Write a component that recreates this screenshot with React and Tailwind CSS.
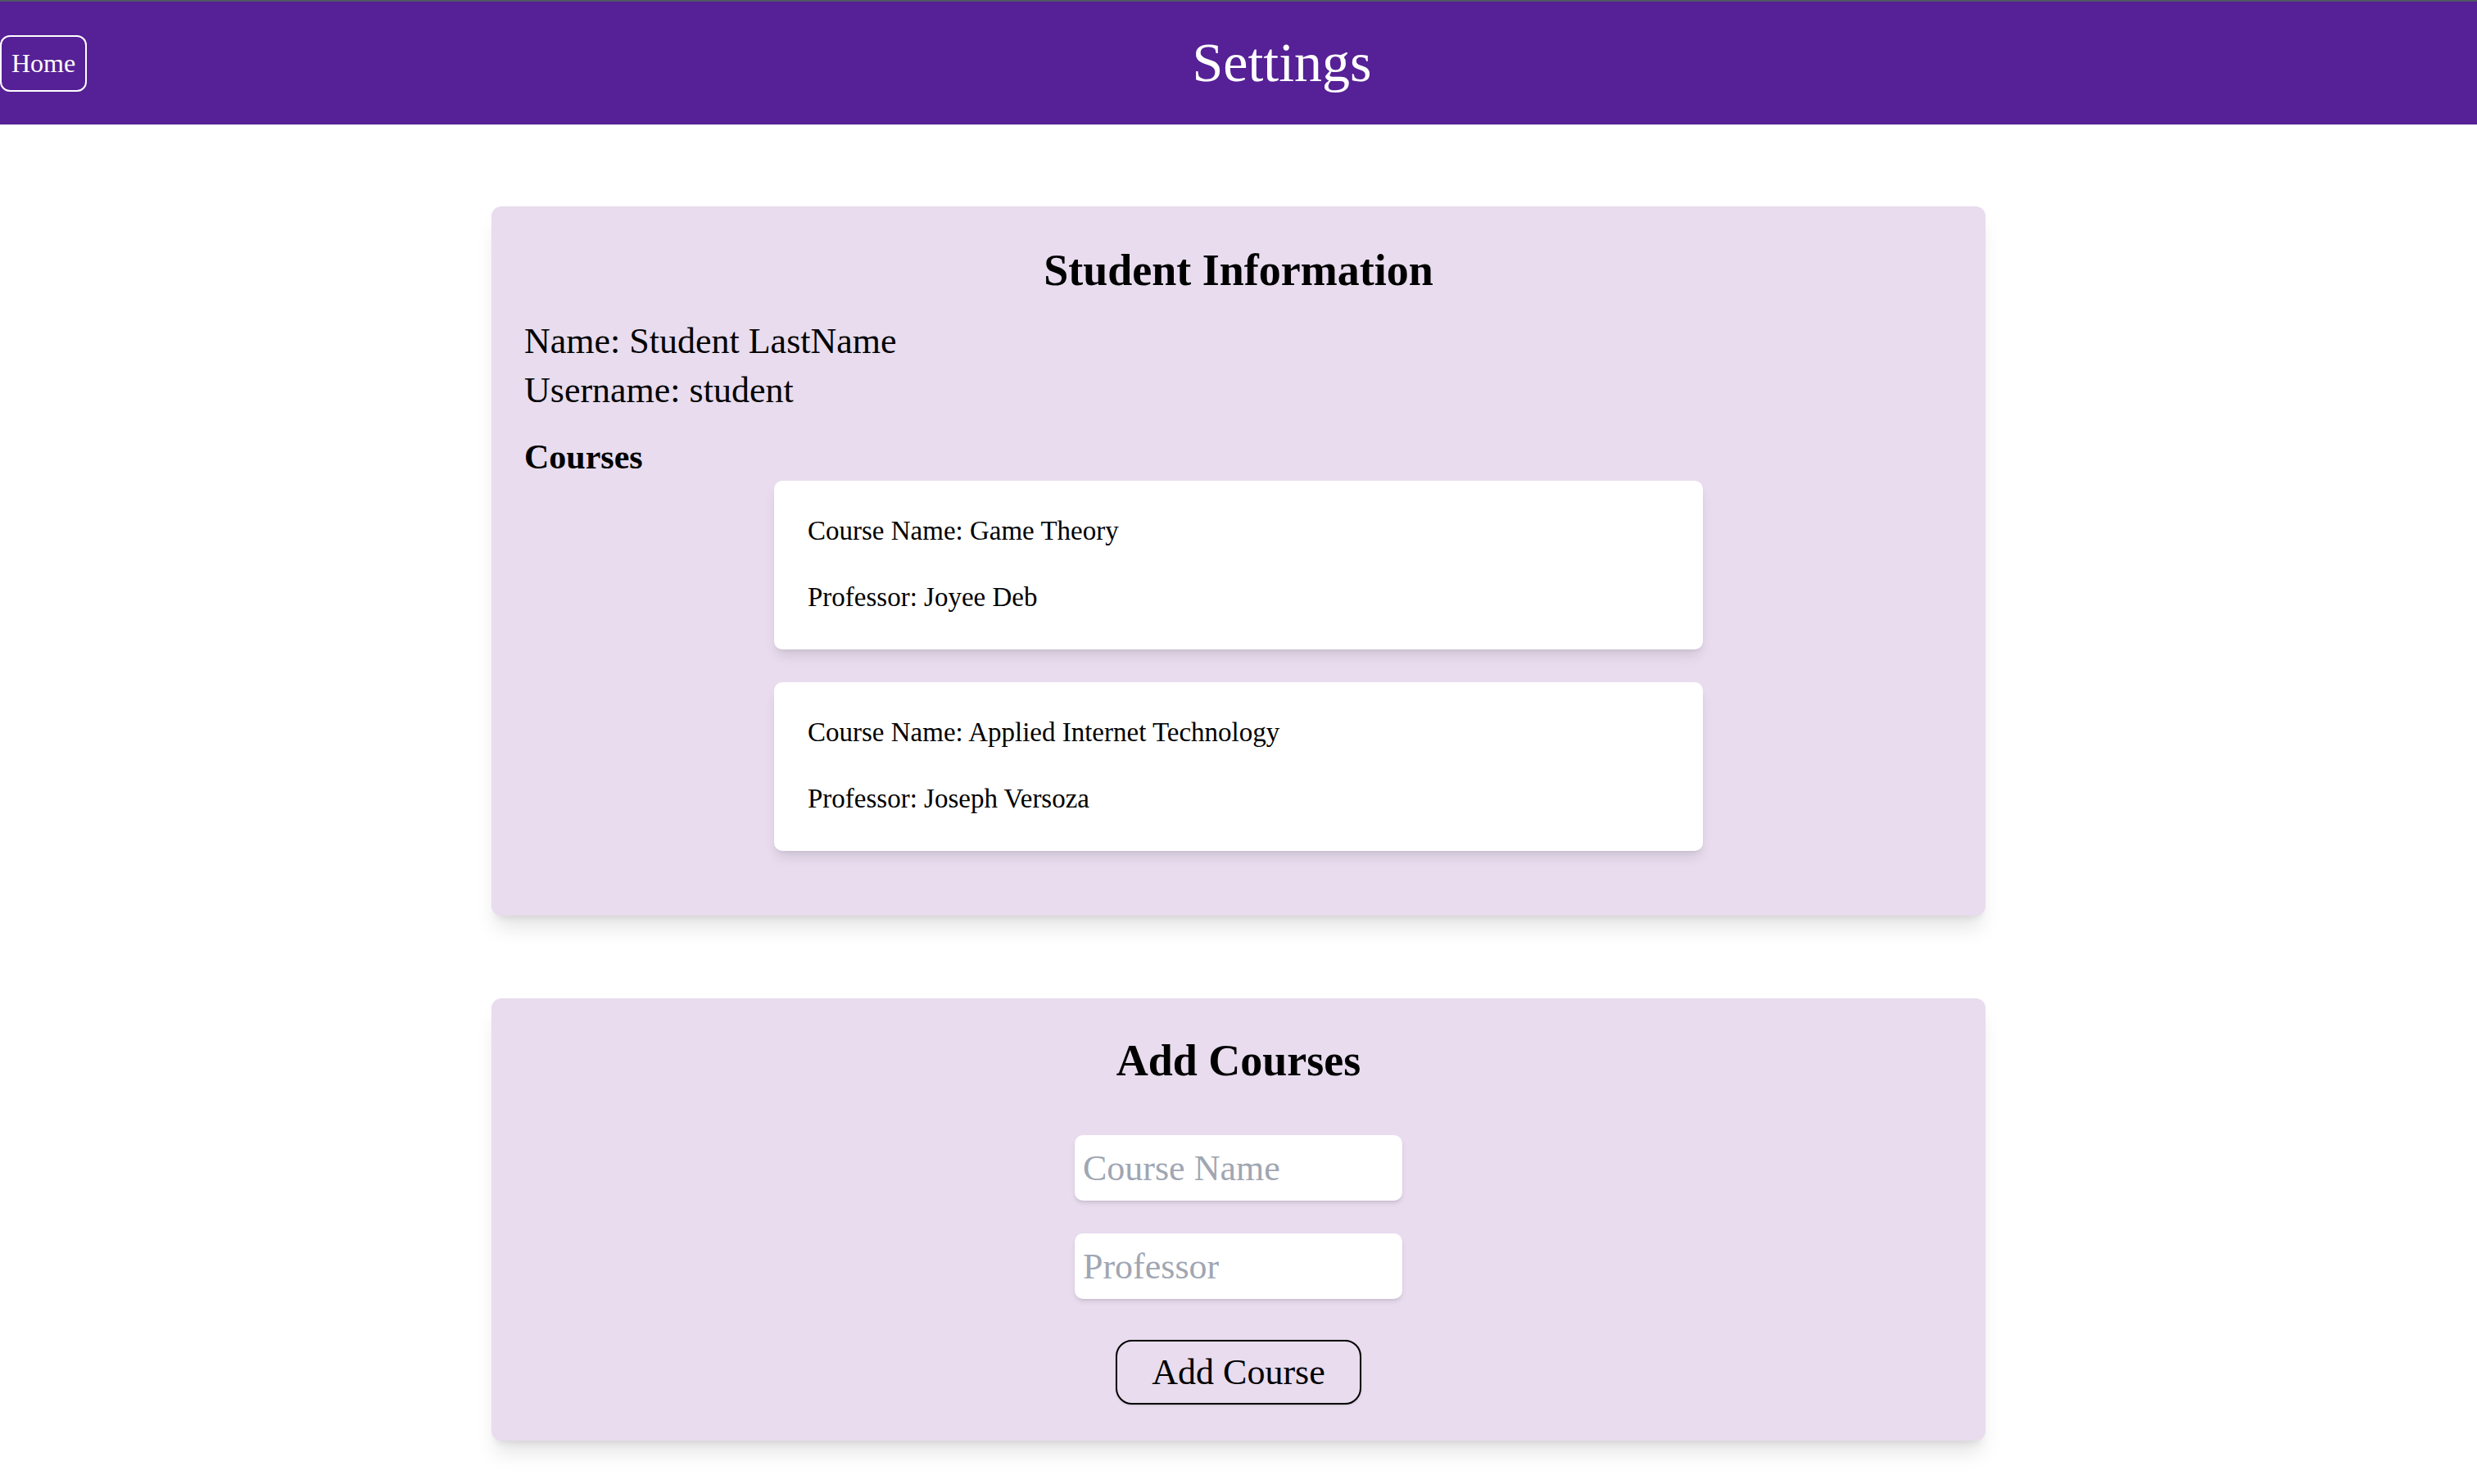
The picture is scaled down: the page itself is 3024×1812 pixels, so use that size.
const courses = [
  { id: 1, name: "Game Theory", professor: "Joyee Deb" },
  { id: 2, name: "Applied Internet Technology", professor: "Joseph Versoza" },
];

const serif = { fontFamily: '"Liberation Serif", "Times New Roman", serif' };

export default function App() {
  return (
    <div className="min-h-screen bg-white text-black" style={serif}>
      <div className="h-[2px] bg-[#4f5862]" />
      <header className="flex h-[150px] items-center bg-[#562096]">
        <button className="flex h-[69px] w-[106px] items-center justify-center rounded-[12px] border-2 border-white text-[32px] text-white">
          Home
        </button>
        <h1 className="flex-1 pb-[2px] text-center text-[68px] leading-none text-white">Settings</h1>
      </header>

      <main className="flex flex-col items-center gap-[101px] pt-[100px] pb-[53px]">
        {/* student info */}
        <section className="w-[1824px] rounded-[12px] bg-[#e8dcee] px-[40px] pt-[46px] pb-[79px] shadow-xl">
          <h2 className="text-center text-[54px] font-bold leading-[65px]">Student Information</h2>
          <div className="mt-[24px] text-[44px] leading-[60px]">
            <p>Name: Student LastName</p>
            <p>Username: student</p>
          </div>
          <h3 className="mt-[26px] text-[42px] font-bold leading-[50px]">Courses</h3>
          <div className="mt-[4px] flex flex-col items-center gap-[40px]">
            {courses.map((course) => (
              <div
                key={course.id}
                className="flex w-[1134px] flex-col gap-[33px] rounded-[10px] bg-white pt-[37px] pb-[40px] pl-[41px] text-[33px] leading-[48px] shadow-lg"
              >
                <p>Course Name: {course.name}</p>
                <p>Professor: {course.professor}</p>
              </div>
            ))}
          </div>
        </section>

        {/* add course form */}
        <section className="flex w-[1824px] flex-col items-center rounded-[12px] bg-[#e8dcee] pt-[44px] pb-[44px] shadow-xl">
          <h2 className="text-center text-[54px] font-bold leading-[65px]">Add Courses</h2>
          <input
            type="text"
            placeholder="Course Name"
            className="mt-[58px] h-[80px] w-[400px] rounded-[10px] bg-white pl-[10px] text-[44px] shadow-md outline-none placeholder:text-[#a0a6b2]"
          />
          <input
            type="text"
            placeholder="Professor"
            className="mt-[40px] h-[80px] w-[400px] rounded-[10px] bg-white pl-[10px] text-[44px] shadow-md outline-none placeholder:text-[#a0a6b2]"
          />
          <button className="mt-[50px] h-[79px] w-[300px] rounded-[20px] border-2 border-black text-[44px] shadow-sm">
            Add Course
          </button>
        </section>
      </main>
    </div>
  );
}
